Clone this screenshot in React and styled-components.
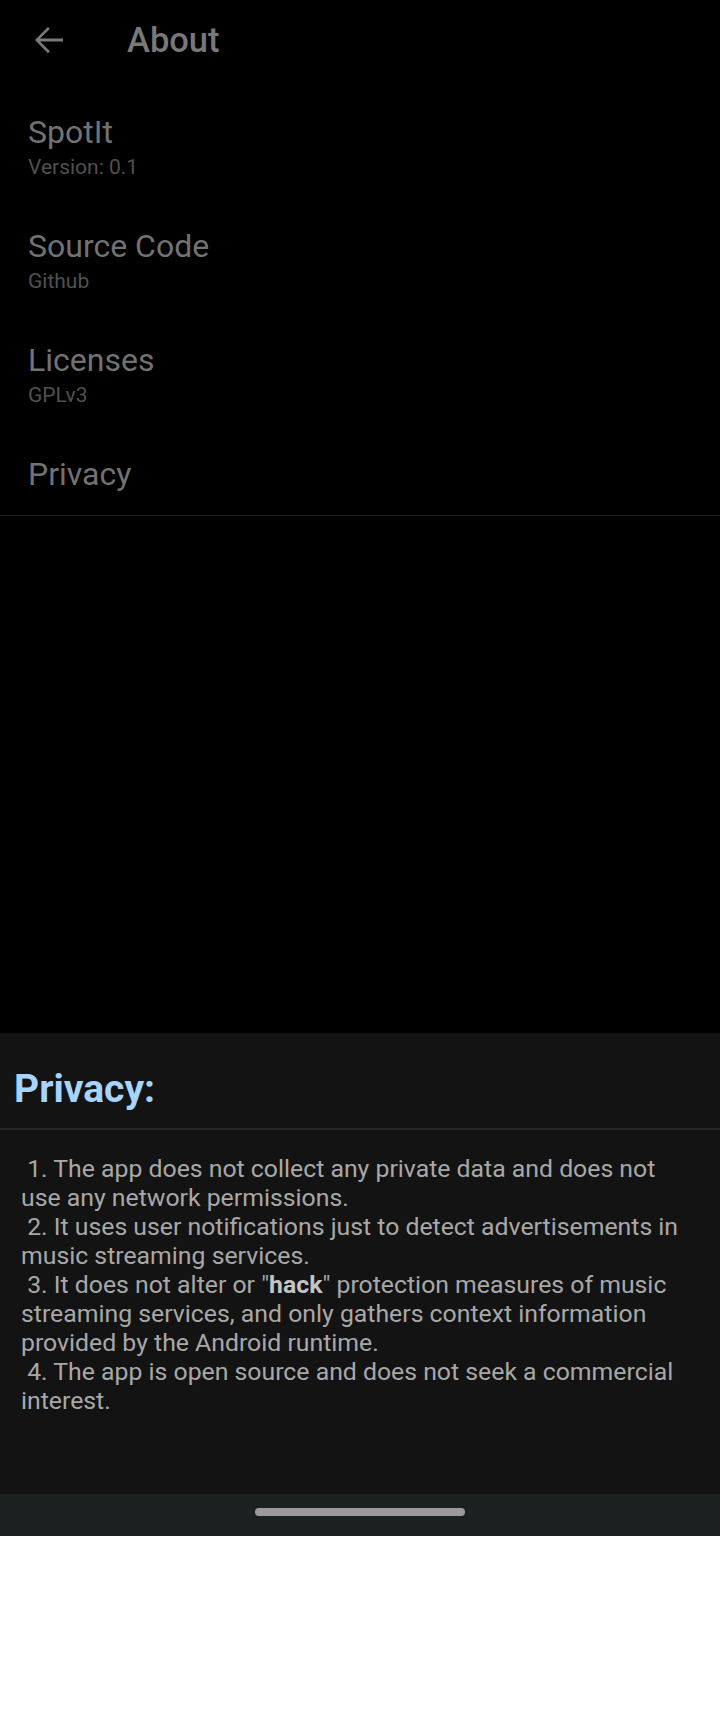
import styled, { createGlobalStyle } from 'styled-components'

const Global = createGlobalStyle`
    html, body {
        margin: 0;
        padding: 0;
        background: #fff;
    }
    body {
        font-family: Roboto, "Noto Sans", "Liberation Sans", sans-serif;
    }
`

const Screen = styled.div`
    height: 1536px;
    display: flex;
    flex-direction: column;
    background: #000;
`

const Header = styled.header`
    height: 80px;
    display: flex;
    align-items: center;
    padding-left: 28px;
`

const BackButton = styled.div`
    width: 42px;
    height: 42px;
    display: flex;
    align-items: center;
    justify-content: center;
    color: #7a7a7a;
`

const Title = styled.h1`
    margin: 0 0 0 57px;
    font-size: 34.5px;
    line-height: 40px;
    font-weight: 500;
    color: #787878;
`

const List = styled.ul`
    list-style: none;
    margin: 0;
    padding: 10px 0 0;
    border-bottom: 1px solid #1e1e1e;
`

const Item = styled.li`
    display: flex;
    flex-direction: column;
    padding: 22px 28px ${p => (p.$single ? '21px' : '23px')};
`

const ItemTitle = styled.span`
    font-size: 32px;
    line-height: 40px;
    color: #727272;
`

const ItemSub = styled.span`
    margin-top: 1px;
    font-size: 21px;
    line-height: 28px;
    color: #505050;
`

const Filler = styled.div`
    flex: 1;
`

const Sheet = styled.section`
    height: 461px;
    background: #131313;
    display: flex;
    flex-direction: column;
`

const SheetTitle = styled.h2`
    margin: 0;
    padding: 33px 14px 16px;
    font-size: 39px;
    line-height: 46px;
    font-weight: 700;
    color: #a6d4fb;
`

const Divider = styled.hr`
    margin: 0;
    border: 0;
    height: 2px;
    background: #262626;
`

const SheetBody = styled.p`
    margin: 0;
    padding: 24px 28px 0 21px;
    font-size: 24.8px;
    line-height: 29px;
    color: #a8a8a8;
    b {
        font-weight: 700;
        color: #c4c4c4;
    }
`

const NavBar = styled.div`
    height: 42px;
    background: #1c2021;
    display: flex;
    align-items: center;
    justify-content: center;
`

const Handle = styled.div`
    width: 210px;
    height: 8px;
    margin-top: -6px;
    border-radius: 4px;
    background: #999;
`

const items = [
    { title: 'SpotIt', sub: 'Version: 0.1' },
    { title: 'Source Code', sub: 'Github' },
    { title: 'Licenses', sub: 'GPLv3' },
    { title: 'Privacy' },
]

function ArrowBack() {
    return (
        <svg width="42" height="42" viewBox="0 0 24 24" fill="currentColor">
            <path d="M20 11.2H6.9l5.6-5.6-1.1-1.1L4 12l7.4 7.5 1.1-1.1-5.6-5.6H20z" />
        </svg>
    )
}

export default function App() {
    const nb = '\u00a0'
    return (
        <>
            <Global />
            <Screen>
                <Header>
                    <BackButton><ArrowBack /></BackButton>
                    <Title>About</Title>
                </Header>
                <List>
                    {items.map(it => (
                        <Item key={it.title} $single={!it.sub}>
                            <ItemTitle>{it.title}</ItemTitle>
                            {it.sub && <ItemSub>{it.sub}</ItemSub>}
                        </Item>
                    ))}
                </List>
                <Filler />
                <Sheet>
                    <SheetTitle>Privacy:</SheetTitle>
                    <Divider />
                    <SheetBody>
                        {nb}1. The app does not collect any private data and does not use any network permissions.<br />
                        {nb}2. It uses user notifications just to detect advertisements in music streaming services.<br />
                        {nb}3. It does not alter or "<b>hack</b>" protection measures of music streaming services, and only gathers context information provided by the Android runtime.<br />
                        {nb}4. The app is open source and does not seek a commercial interest.
                    </SheetBody>
                </Sheet>
                <NavBar><Handle /></NavBar>
            </Screen>
        </>
    )
}
